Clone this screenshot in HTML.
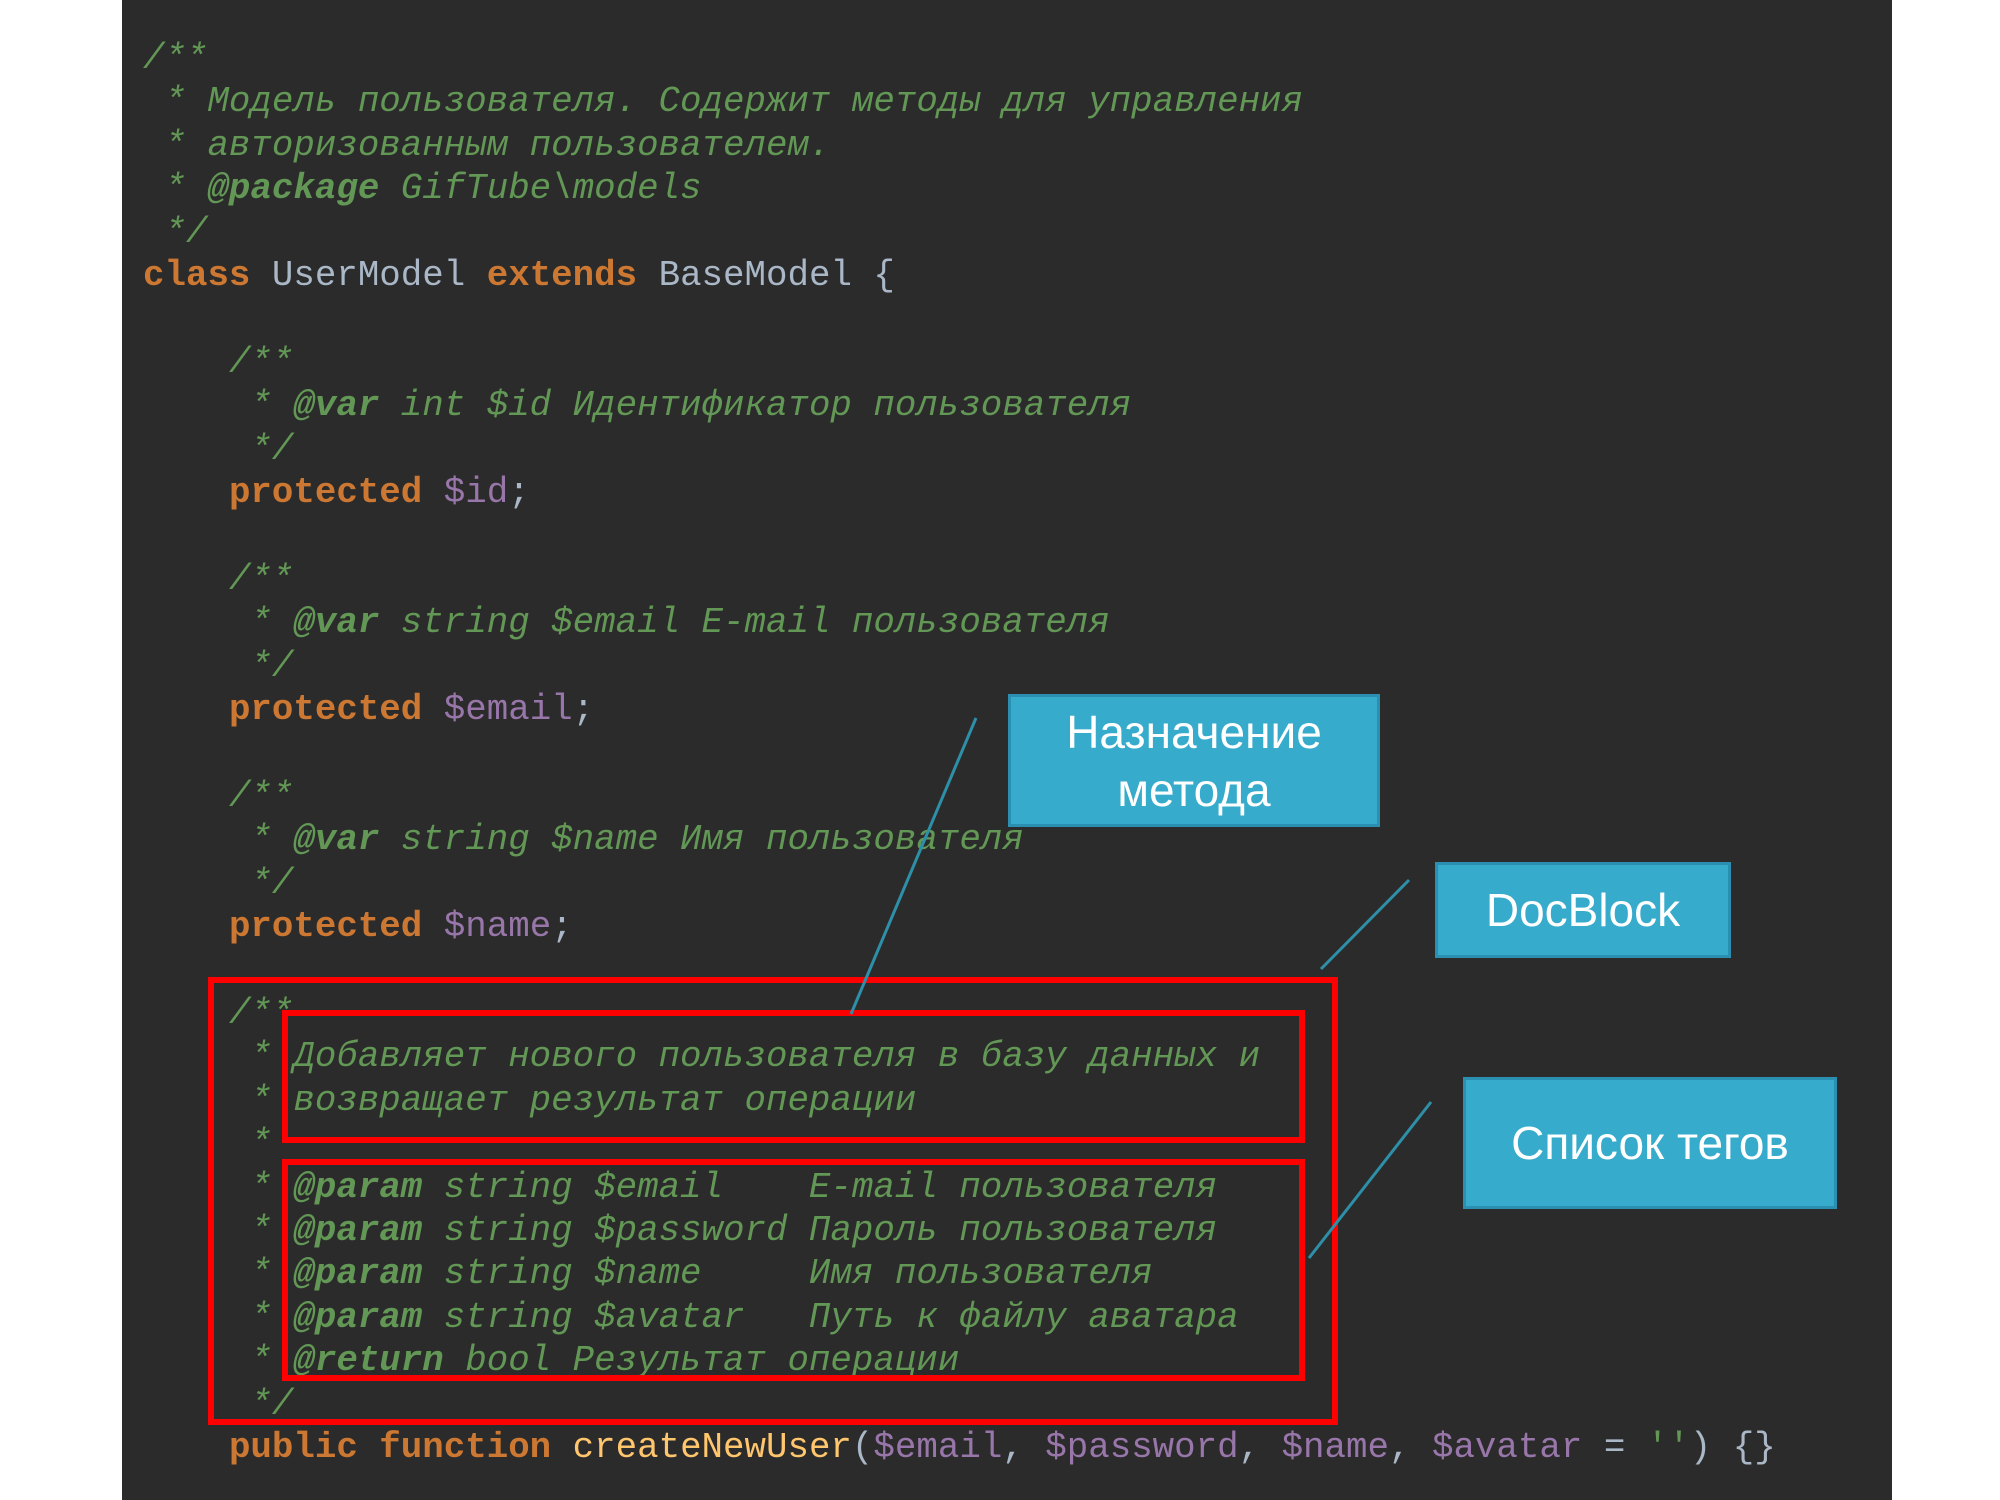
<!DOCTYPE html>
<html><head><meta charset="utf-8"><style>
html,body{margin:0;padding:0;background:#fff;width:2000px;height:1500px;overflow:hidden}
#p{position:absolute;left:122px;top:0;width:1770px;height:1500px;background:#2b2b2b}
pre{position:absolute;left:143px;top:37px;margin:0;font-family:"Liberation Mono","DejaVu Sans Mono",monospace;font-size:35.8px;line-height:43.4px;color:#a9b7c6}
.c{color:#629755;font-style:italic}
.t{color:#629755;font-style:italic;font-weight:bold}
.k{color:#cc7832;font-weight:bold}
.v{color:#9876aa}
.f{color:#ffc66d}
.r{position:absolute;border:6px solid #ff0000;box-sizing:border-box}
.b{position:absolute;background:#36abcc;border:3px solid #2a8fb0;box-sizing:border-box;color:#fff;font-family:"Liberation Sans","DejaVu Sans",sans-serif;font-size:46px;display:flex;align-items:center;justify-content:center;text-align:center;line-height:58px}
svg{position:absolute;left:0;top:0}
</style></head><body>
<div id="p"></div>
<pre><span class="c">/**
 * Модель пользователя. Содержит методы для управления
 * авторизованным пользователем.
 * <span class="t">@package</span> GifTube\models
 */</span>
<span class="k">class</span> UserModel <span class="k">extends</span> BaseModel {

    <span class="c">/**
     * <span class="t">@var</span> int $id Идентификатор пользователя
     */</span>
    <span class="k">protected</span> <span class="v">$id</span>;

    <span class="c">/**
     * <span class="t">@var</span> string $email E-mail пользователя
     */</span>
    <span class="k">protected</span> <span class="v">$email</span>;

    <span class="c">/**
     * <span class="t">@var</span> string $name Имя пользователя
     */</span>
    <span class="k">protected</span> <span class="v">$name</span>;

    <span class="c">/**
     * Добавляет нового пользователя в базу данных и
     * возвращает результат операции
     *
     * <span class="t">@param</span> string $email    E-mail пользователя
     * <span class="t">@param</span> string $password Пароль пользователя
     * <span class="t">@param</span> string $name     Имя пользователя
     * <span class="t">@param</span> string $avatar   Путь к файлу аватара
     * <span class="t">@return</span> bool Результат операции
     */</span>
    <span class="k">public function</span> <span class="f">createNewUser</span>(<span class="v">$email</span>, <span class="v">$password</span>, <span class="v">$name</span>, <span class="v">$avatar</span> = <span class="c" style="font-style:normal">''</span>) {}
</pre>
<div class="r" style="left:208px;top:977px;width:1130px;height:448px"></div>
<div class="r" style="left:282px;top:1010px;width:1023px;height:133px"></div>
<div class="r" style="left:282px;top:1159px;width:1023px;height:222px"></div>
<svg width="2000" height="1500"><g stroke="#2d8fa8" stroke-width="3"><line x1="976" y1="718" x2="851" y2="1014"/><line x1="1409" y1="880" x2="1321" y2="969"/><line x1="1431" y1="1102" x2="1309" y2="1258"/></g></svg>
<div class="b" style="left:1008px;top:694px;width:372px;height:133px">Назначение<br>метода</div>
<div class="b" style="left:1435px;top:862px;width:296px;height:96px">DocBlock</div>
<div class="b" style="left:1463px;top:1077px;width:374px;height:132px">Список тегов</div>
</body></html>
